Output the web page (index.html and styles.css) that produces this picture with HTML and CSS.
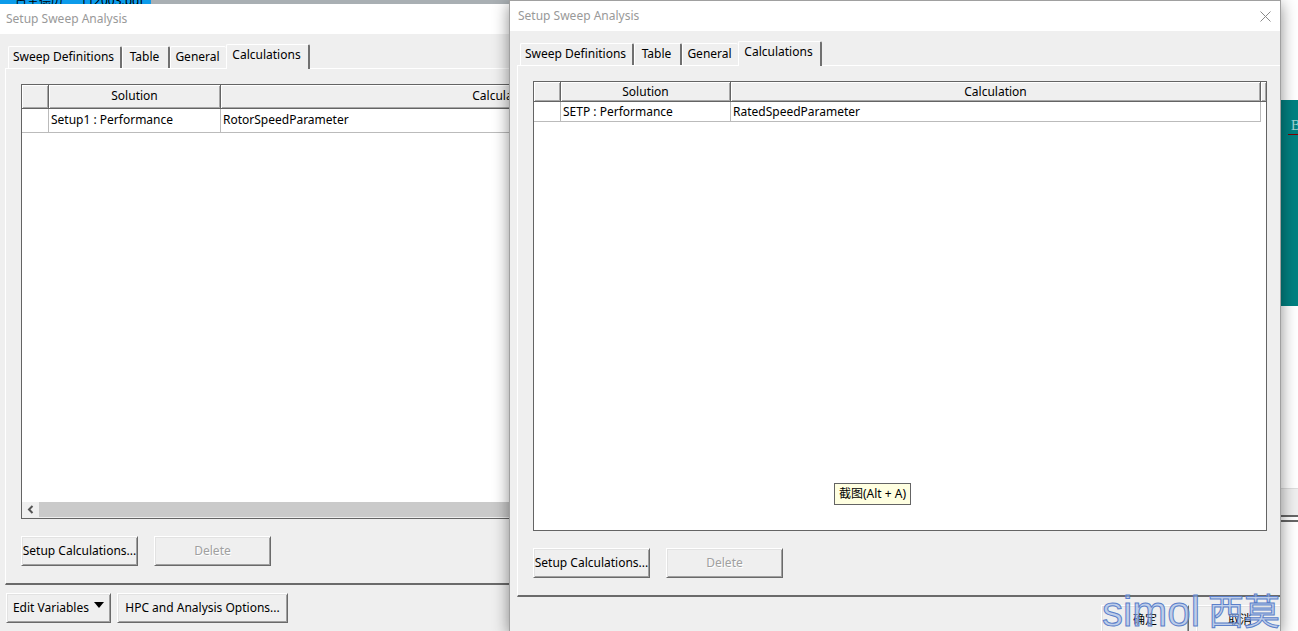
FILE: index.html
```html
<!DOCTYPE html>
<html lang="zh-CN">
<head>
<meta charset="utf-8">
<title>Setup Sweep Analysis</title>
<link rel="stylesheet" href="styles.css">
</head>
<body>
<div class="desktop">
  <div class="taskstrip"><div class="taskstrip-active"><span>古圣德历</span><span>_112003.pdf</span></div></div>
  <div class="editor">
    <div class="editor-sheet"><span class="editor-link">B</span></div>
    <div class="editor-bar"></div>
    <div class="editor-rule"></div>
  </div>

  <section class="window window-back">
    <header class="titlebar"><h1 class="title">Setup Sweep Analysis</h1></header>
    <nav class="tabs">
      <button class="tab">Sweep Definitions</button>
      <button class="tab">Table</button>
      <button class="tab">General</button>
      <button class="tab tab-active">Calculations</button>
    </nav>
    <div class="panel">
      <div class="grid-box">
        <table class="grid">
          <colgroup><col class="col-mark"><col class="col-solution"><col></colgroup>
          <thead><tr><th></th><th>Solution</th><th>Calculation</th></tr></thead>
          <tbody><tr><td></td><td>Setup1 : Performance</td><td>RotorSpeedParameter</td></tr></tbody>
        </table>
        <div class="scrollbar">
          <button class="scroll-arrow" aria-label="Scroll left"><svg width="7" height="9" viewBox="0 0 7 9"><path d="M5.5 1 L2 4.5 L5.5 8" fill="none" stroke="#555" stroke-width="2"/></svg></button>
          <div class="scroll-thumb"></div>
        </div>
      </div>
      <div class="actions">
        <button class="btn btn-fixed">Setup Calculations...</button>
        <button class="btn btn-fixed" disabled>Delete</button>
      </div>
    </div>
    <footer class="footer">
      <button class="btn btn-edit">Edit Variables <svg width="10" height="6" viewBox="0 0 10 6"><path d="M0 0H10L5 6Z"/></svg></button>
      <button class="btn btn-hpc">HPC and Analysis Options...</button>
    </footer>
  </section>

  <section class="window window-front">
    <header class="titlebar">
      <h1 class="title">Setup Sweep Analysis</h1>
      <button class="close" aria-label="Close"><svg width="11" height="11" viewBox="0 0 11 11"><path d="M.5 .5 L10.5 10.5 M10.5 .5 L.5 10.5" stroke="#8a8a8a" fill="none"/></svg></button>
    </header>
    <nav class="tabs">
      <button class="tab">Sweep Definitions</button>
      <button class="tab">Table</button>
      <button class="tab">General</button>
      <button class="tab tab-active">Calculations</button>
    </nav>
    <div class="panel">
      <div class="grid-box">
        <table class="grid">
          <colgroup><col class="col-mark"><col class="col-solution"><col><col class="col-end"></colgroup>
          <thead><tr><th></th><th>Solution</th><th>Calculation</th><th></th></tr></thead>
          <tbody><tr><td></td><td>SETP : Performance</td><td>RatedSpeedParameter</td><td class="blank"></td></tr></tbody>
        </table>
      </div>
      <div class="actions">
        <button class="btn btn-fixed">Setup Calculations...</button>
        <button class="btn btn-fixed" disabled>Delete</button>
      </div>
    </div>
    <footer class="footer">
      <button class="btn btn-dialog">确定</button>
      <button class="btn btn-dialog">取消</button>
    </footer>
    <div class="watermark"><span class="watermark-latin">simol</span><span class="watermark-cjk">西莫</span></div>
  </section>

  <div class="tooltip" role="tooltip">截图(Alt + A)</div>
</div>
</body>
</html>
```
FILE: styles.css
```css
* { box-sizing: border-box; }
body {
  margin: 0;
  font-family: "Noto Sans", "Noto Sans CJK SC", sans-serif;
  font-size: 12px;
  line-height: 18px;
  color: #000;
}
button { font: inherit; color: inherit; border-radius: 0; }
.desktop { position: relative; height: 100vh; overflow: hidden; background: #fff; }

.taskstrip { height: 4px; width: 100%; background: #a9afb3; overflow: hidden; }
.taskstrip-active {
  display: flex; gap: 12px; width: 151px; height: 4px; padding-left: 15px;
  background: #0c9bea; line-height: 2px; white-space: nowrap; overflow: hidden;
}

.editor { position: absolute; top: 0; right: 0; bottom: 0; width: 18px; background: #fff; overflow: hidden; padding-top: 100px; }
.editor-sheet { height: 206px; background: #008080; padding: 17px 0 0 8px; }
.editor-link {
  display: block; height: 18px; padding-left: 3px;
  border-bottom: 1px solid #800000; color: #9fd4d4;
  font-family: "Liberation Serif", serif; font-size: 14px;
}
.editor-bar { margin-top: 182px; height: 29px; background: #efefef; border-top: 1px solid #ddd; border-bottom: 2px solid #666; }
.editor-rule { margin-top: 3px; height: 2px; background: #666; }

.window { position: absolute; bottom: 0; display: flex; flex-direction: column; background: #efefef; }
.window-back { left: 0; top: 4px; width: 800px; }
.window-front { left: 509px; right: 17px; top: 0; border: 1px solid #a0a0a0; border-bottom: 0; box-shadow: 0 4px 15px rgba(0, 0, 0, .45); }

.titlebar { display: flex; align-items: center; height: 30px; flex: none; background: #fff; padding: 0 9px 0 8px; }
.window-back .titlebar { padding-left: 6px; }
.title { flex: 1; margin: 0; font-size: 12px; font-weight: normal; color: #999; }
.close { display: flex; padding: 0; border: 0; background: none; }

.tabs { display: flex; align-items: flex-end; flex: none; height: 34px; padding-left: 10px; }
.window-back .tabs { padding-left: 8px; }
.tab {
  height: 22px; width: 48px; padding: 0 2px 2px 0; text-align: center; white-space: nowrap;
  background: #efefef; line-height: 18px;
  border: 1px solid #fff; border-right: 2px solid #707070; border-bottom: 0;
  border-radius: 2px 2px 0 0;
}
.tab:first-child { width: 114px; }
.tab:nth-child(3) { width: 56px; border-right: 0; }
.tab-active { width: 84px; height: 25px; margin-bottom: -1px; padding-bottom: 4px; position: relative; }

.panel {
  flex: 1; min-height: 0; display: flex; flex-direction: column;
  margin-left: 7px; padding: 15px 13px 17px 15px;
  border: 1px solid #fff; border-right: 0; border-bottom: 2px solid #6a6a6a;
}
.window-back .panel { margin-left: 5px; }

.grid-box { flex: 1; display: flex; flex-direction: column; justify-content: space-between; background: #fff; border: 1px solid #646464; }
.grid { width: 100%; table-layout: fixed; border-collapse: separate; border-spacing: 0; }
.col-mark { width: 27px; }
.col-solution { width: 170px; }
.window-back .col-solution { width: 172px; }
.col-end { width: 5px; }
.grid th, .grid td { height: 20px; padding: 1px 2px 0; line-height: 18px; font-weight: normal; white-space: nowrap; }
.grid th {
  background: #efefef; text-align: center;
  border-right: 1px solid #646464; border-bottom: 1px solid #646464;
  box-shadow: inset 1px 1px #fff, inset -1px -1px #a8a8a8;
}
.grid th:last-child { border-right: 0; }
.grid td { text-align: left; border-right: 1px solid #bbb; border-bottom: 1px solid #bbb; }
.grid .blank { border: 0; padding: 0; }
.window-front .grid th:last-child { padding: 0; }
.window-back .grid th, .window-back .grid td { height: 24px; padding: 0 2px 1px; }

.scrollbar { display: flex; height: 16px; background: #efefef; border-bottom: 1px solid #efefef; }
.scroll-arrow { display: flex; align-items: center; width: 17px; padding: 0 0 0 5px; border: 0; background: #efefef; }
.scroll-thumb { flex: 1; background: #cacaca; }

.actions { display: flex; gap: 16px; flex: none; margin-top: 17px; }
.btn {
  height: 30px; padding: 0; white-space: nowrap; background: #efefef;
  border: 1px solid #fff; border-right-color: #6a6a6a; border-bottom-color: #6a6a6a;
  box-shadow: inset 1px 1px #e2e2e2, inset -1px -1px #a0a0a0;
}
.btn-fixed { width: 117px; }
.btn:disabled { color: #a0a0a0; text-shadow: 1px 1px #fff; }
.footer { display: flex; flex: none; height: 46px; gap: 6px; padding: 8px 0 0 6px; }
.btn-edit { width: 105px; }
.btn-edit svg { margin: 0 0 4px 2px; }
.btn-hpc { width: 171px; }
.window-front .footer { height: 34px; gap: 7px; justify-content: flex-end; overflow: hidden; padding-left: 0; }
.btn-dialog { width: 88px; flex: none; }
.btn-dialog:last-child { margin-right: -4px; }

.watermark {
  position: absolute; right: 0; bottom: 0; display: flex; align-items: center; height: 38px; gap: 8px;
  color: rgba(160, 185, 230, .65); -webkit-text-stroke: 1px #5b7fc9; white-space: nowrap; pointer-events: none;
}
.watermark-latin { font-family: "Liberation Sans", sans-serif; font-size: 42px; }
.watermark-cjk { font-size: 36px; }

.tooltip {
  position: absolute; left: 834px; top: 483px; padding: 1px 4px; line-height: 18px;
  background: #ffffe1; border: 1px solid #646464;
}
```
